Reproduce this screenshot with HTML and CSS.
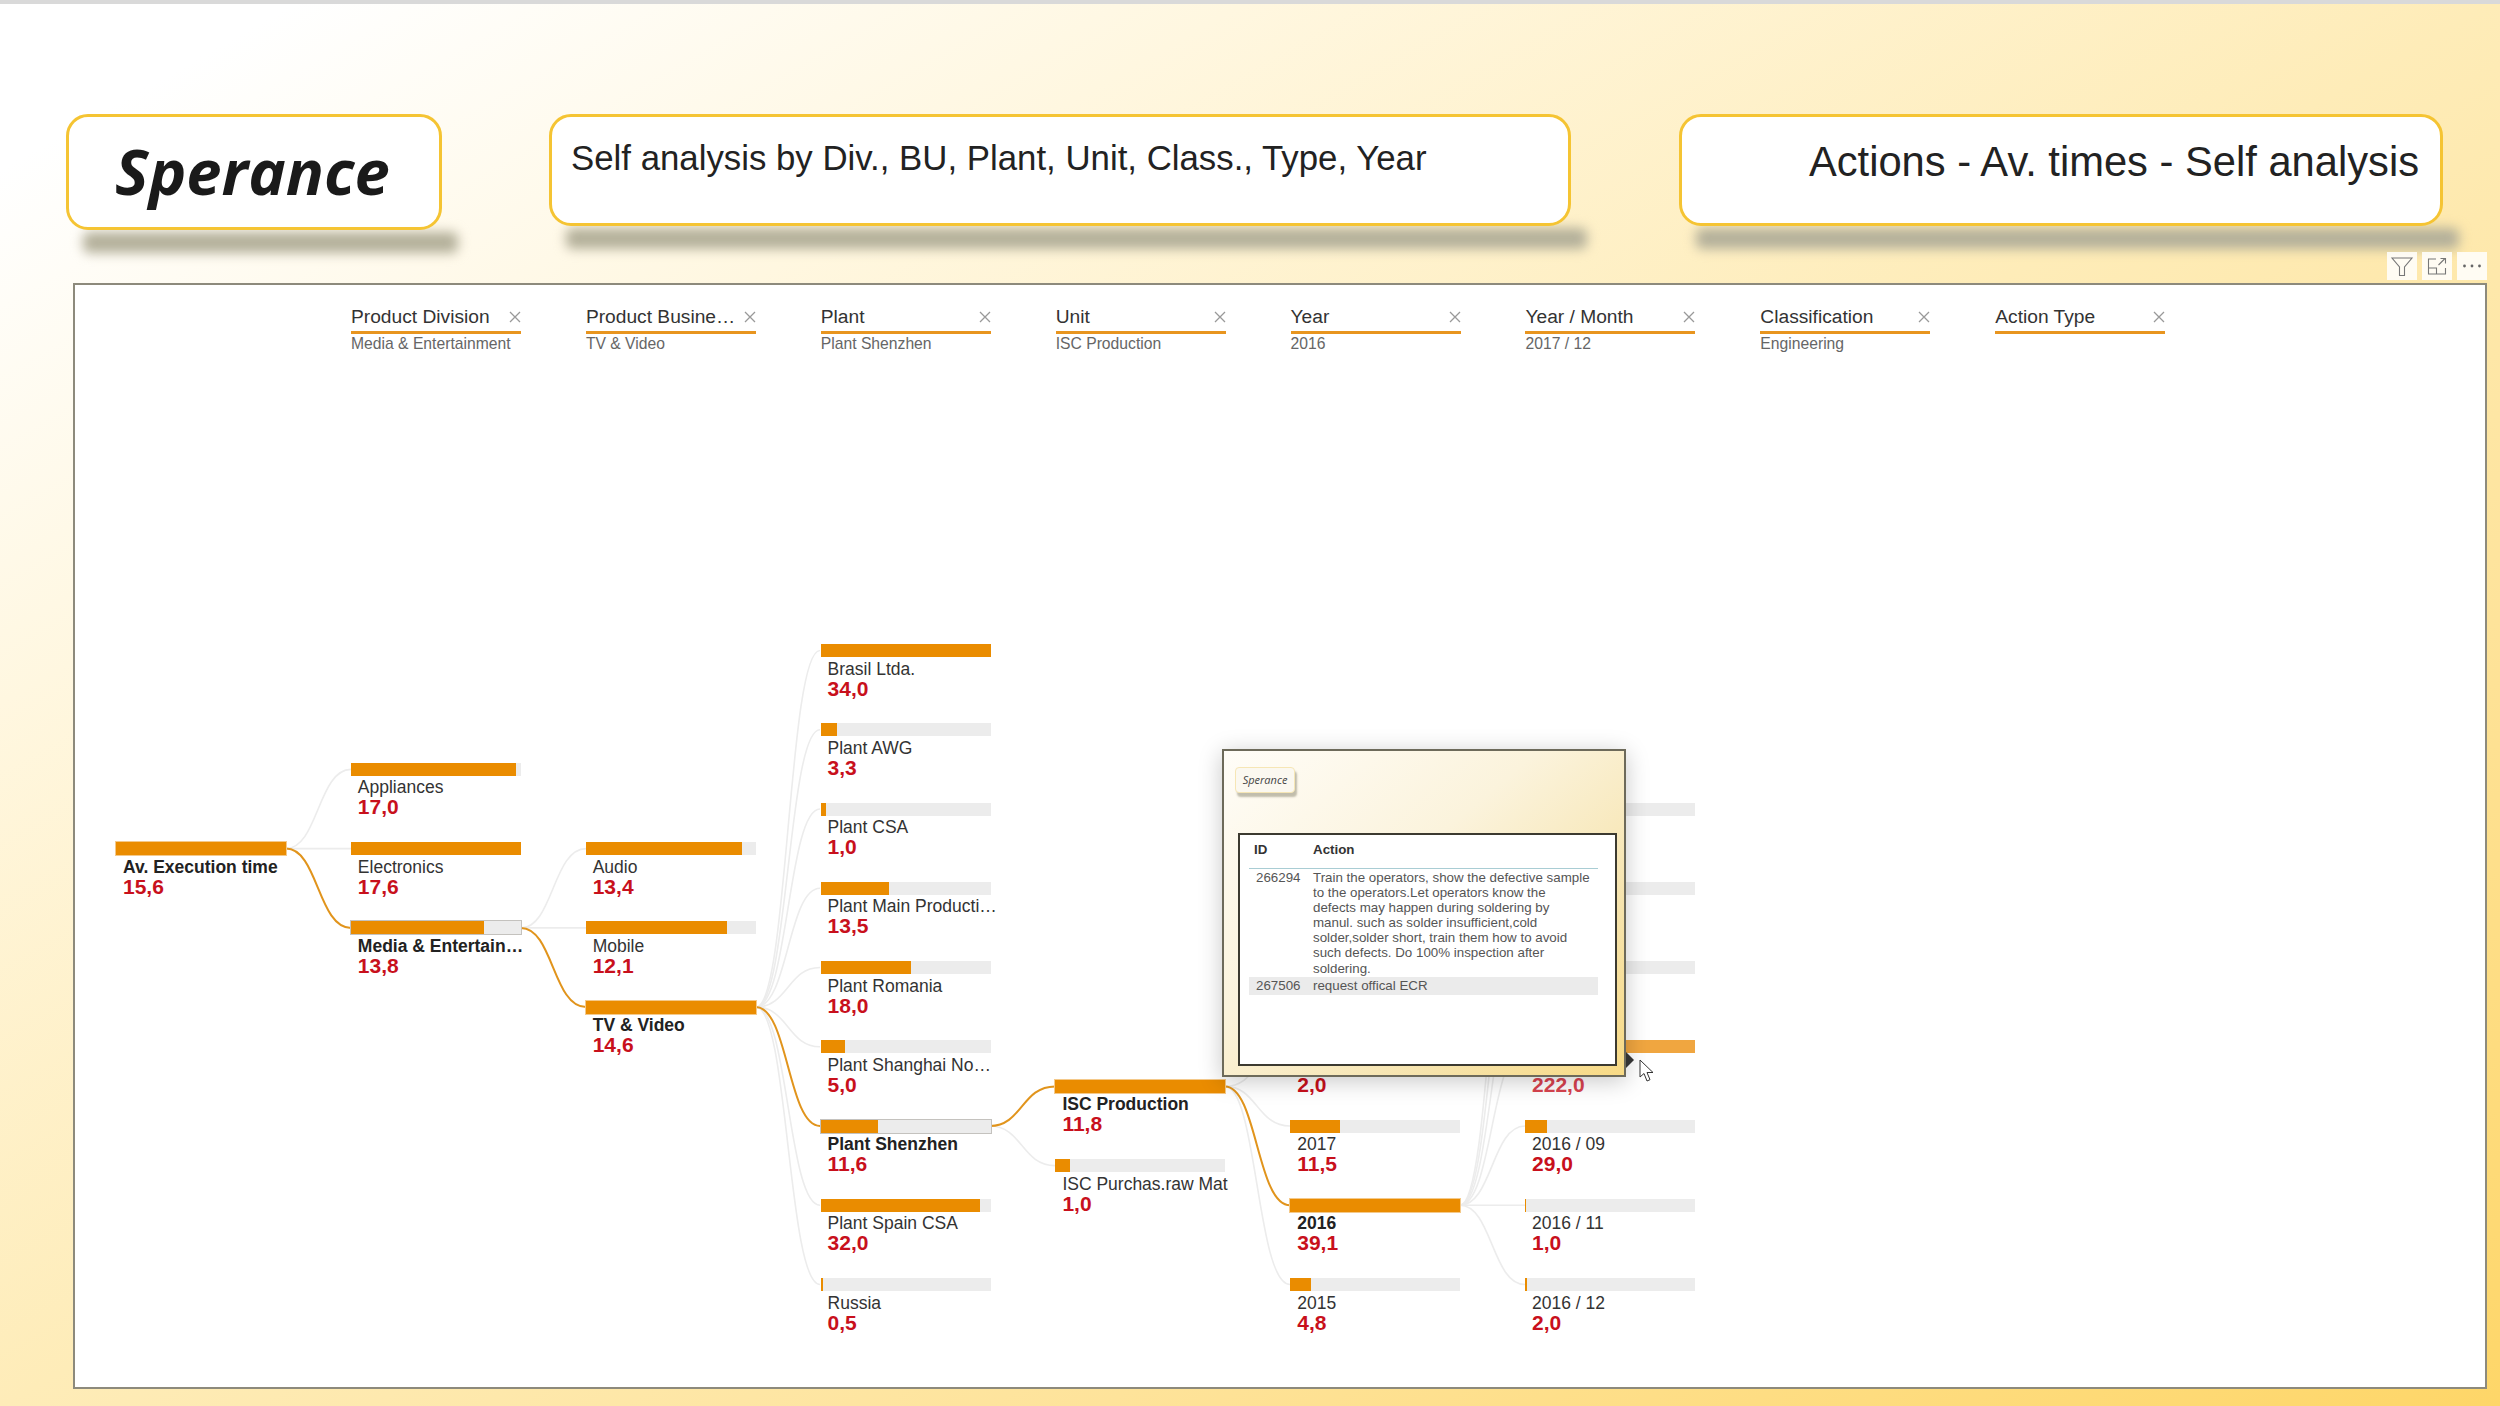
FILE: index.html
```html
<!DOCTYPE html>
<html lang="en">
<head>
<meta charset="utf-8">
<title>Actions - Av. times - Self analysis</title>
<link rel="stylesheet" href="styles.css">
</head>
<body>
<div class="strip"></div>
<header class="header">
  <div class="card card-logo"><span class="logo">Sperance</span></div>
  <div class="card card-sub">Self analysis by Div., BU, Plant, Unit, Class., Type, Year</div>
  <div class="card card-title">Actions - Av. times - Self analysis</div>
</header>
<div class="actions">
  <div class="action"><svg width="24" height="24" viewBox="0 0 24 24"><path d="M2 4H22L14.5 13V21.5H9.5V13Z" fill="none" stroke="#777" stroke-width="1.1"/></svg></div>
  <div class="action"><svg width="24" height="24" viewBox="0 0 24 24"><path d="M11 5H3.5V20H20.5V14M3.5 14H11.5V20M13.5 11L20 4.5M15.5 4.5H20.5V9.5" fill="none" stroke="#777" stroke-width="1.1"/></svg></div>
  <div class="action"><svg width="24" height="24" viewBox="0 0 24 24"><circle cx="4.5" cy="12" r="1.4" fill="#666"/><circle cx="12" cy="12" r="1.4" fill="#666"/><circle cx="19.5" cy="12" r="1.4" fill="#666"/></svg></div>
</div>
<main class="panel">
  <div class="slicers">
    <div class="slicer"><div class="slicer-head"><span>Product Division</span><svg class="x" width="12" height="12" viewBox="0 0 12 12"><path d="M1 1L11 11M11 1L1 11"/></svg></div><div class="slicer-sub">Media &amp; Entertainment</div></div>
    <div class="slicer"><div class="slicer-head"><span>Product Busine…</span><svg class="x" width="12" height="12" viewBox="0 0 12 12"><path d="M1 1L11 11M11 1L1 11"/></svg></div><div class="slicer-sub">TV &amp; Video</div></div>
    <div class="slicer"><div class="slicer-head"><span>Plant</span><svg class="x" width="12" height="12" viewBox="0 0 12 12"><path d="M1 1L11 11M11 1L1 11"/></svg></div><div class="slicer-sub">Plant Shenzhen</div></div>
    <div class="slicer"><div class="slicer-head"><span>Unit</span><svg class="x" width="12" height="12" viewBox="0 0 12 12"><path d="M1 1L11 11M11 1L1 11"/></svg></div><div class="slicer-sub">ISC Production</div></div>
    <div class="slicer"><div class="slicer-head"><span>Year</span><svg class="x" width="12" height="12" viewBox="0 0 12 12"><path d="M1 1L11 11M11 1L1 11"/></svg></div><div class="slicer-sub">2016</div></div>
    <div class="slicer"><div class="slicer-head"><span>Year / Month</span><svg class="x" width="12" height="12" viewBox="0 0 12 12"><path d="M1 1L11 11M11 1L1 11"/></svg></div><div class="slicer-sub">2017 / 12</div></div>
    <div class="slicer"><div class="slicer-head"><span>Classification</span><svg class="x" width="12" height="12" viewBox="0 0 12 12"><path d="M1 1L11 11M11 1L1 11"/></svg></div><div class="slicer-sub">Engineering</div></div>
    <div class="slicer"><div class="slicer-head"><span>Action Type</span><svg class="x" width="12" height="12" viewBox="0 0 12 12"><path d="M1 1L11 11M11 1L1 11"/></svg></div><div class="slicer-sub"></div></div>
  </div>
  <div class="tree">
    <svg class="links" width="1580" height="742" viewBox="116 644 1580 742">
      <g class="link">
        <path d="M286 848.6C318 848.6 318 769.4 351 769.4"/>
        <path d="M286 848.6H351"/>
        <path d="M521 927.9C553 927.9 553 848.6 586 848.6"/>
        <path d="M521 927.9H586"/>
        <path d="M756 1007.1C788 1007.1 788 650.5 820 650.5"/>
        <path d="M756 1007.1C788 1007.1 788 729.75 820 729.75"/>
        <path d="M756 1007.1C788 1007.1 788 809 820 809"/>
        <path d="M756 1007.1C788 1007.1 788 888.25 820 888.25"/>
        <path d="M756 1007.1C788 1007.1 788 967.5 820 967.5"/>
        <path d="M756 1007.1C788 1007.1 788 1046.75 820 1046.75"/>
        <path d="M756 1007.1C788 1007.1 788 1205.25 820 1205.25"/>
        <path d="M756 1007.1C788 1007.1 788 1284.5 820 1284.5"/>
        <path d="M990 1126C1022 1126 1022 1165.6 1055 1165.6"/>
        <path d="M1225 1086.4C1257 1086.4 1257 1046.75 1290 1046.75"/>
        <path d="M1225 1086.4C1257 1086.4 1257 1126 1290 1126"/>
        <path d="M1225 1086.4C1257 1086.4 1257 1284.5 1290 1284.5"/>
        <path d="M1460 1205.25C1492 1205.25 1492 809 1525 809"/>
        <path d="M1460 1205.25C1492 1205.25 1492 888.25 1525 888.25"/>
        <path d="M1460 1205.25C1492 1205.25 1492 967.5 1525 967.5"/>
        <path d="M1460 1205.25C1492 1205.25 1492 1046.75 1525 1046.75"/>
        <path d="M1460 1205.25C1492 1205.25 1492 1126 1525 1126"/>
        <path d="M1460 1205.25H1525"/>
        <path d="M1460 1205.25C1492 1205.25 1492 1284.5 1525 1284.5"/>
      </g>
      <g class="link-on">
        <path d="M286 848.6C318 848.6 318 927.9 351 927.9"/>
        <path d="M521 927.9C553 927.9 553 1007.1 586 1007.1"/>
        <path d="M756 1007.1C788 1007.1 788 1126 820 1126"/>
        <path d="M990 1126C1022 1126 1022 1086.4 1055 1086.4"/>
        <path d="M1225 1086.4C1257 1086.4 1257 1205.25 1290 1205.25"/>
      </g>
    </svg>

    <div class="col col-root">
      <div class="node on"><div class="bar"><div class="fill" style="width:100%"></div></div><div class="name">Av. Execution time</div><div class="val">15,6</div></div>
    </div>
    <div class="col col-div">
      <div class="node"><div class="bar"><div class="fill" style="width:97%"></div></div><div class="name">Appliances</div><div class="val">17,0</div></div>
      <div class="node"><div class="bar"><div class="fill" style="width:100%"></div></div><div class="name">Electronics</div><div class="val">17,6</div></div>
      <div class="node on sel"><div class="bar"><div class="fill" style="width:78.4%"></div></div><div class="name">Media &amp; Entertain…</div><div class="val">13,8</div></div>
    </div>
    <div class="col col-bu">
      <div class="node"><div class="bar"><div class="fill" style="width:92%"></div></div><div class="name">Audio</div><div class="val">13,4</div></div>
      <div class="node"><div class="bar"><div class="fill" style="width:83%"></div></div><div class="name">Mobile</div><div class="val">12,1</div></div>
      <div class="node on"><div class="bar"><div class="fill" style="width:100%"></div></div><div class="name">TV &amp; Video</div><div class="val">14,6</div></div>
    </div>
    <div class="col col-plant">
      <div class="node"><div class="bar"><div class="fill" style="width:100%"></div></div><div class="name">Brasil Ltda.</div><div class="val">34,0</div></div>
      <div class="node"><div class="bar"><div class="fill" style="width:9.6%"></div></div><div class="name">Plant AWG</div><div class="val">3,3</div></div>
      <div class="node"><div class="bar"><div class="fill" style="width:3%"></div></div><div class="name">Plant CSA</div><div class="val">1,0</div></div>
      <div class="node"><div class="bar"><div class="fill" style="width:40%"></div></div><div class="name">Plant Main Producti…</div><div class="val">13,5</div></div>
      <div class="node"><div class="bar"><div class="fill" style="width:53%"></div></div><div class="name">Plant Romania</div><div class="val">18,0</div></div>
      <div class="node"><div class="bar"><div class="fill" style="width:14.5%"></div></div><div class="name">Plant Shanghai No…</div><div class="val">5,0</div></div>
      <div class="node on sel"><div class="bar"><div class="fill" style="width:34%"></div></div><div class="name">Plant Shenzhen</div><div class="val">11,6</div></div>
      <div class="node"><div class="bar"><div class="fill" style="width:94%"></div></div><div class="name">Plant Spain CSA</div><div class="val">32,0</div></div>
      <div class="node"><div class="bar"><div class="fill" style="width:1.5%"></div></div><div class="name">Russia</div><div class="val">0,5</div></div>
    </div>
    <div class="col col-unit">
      <div class="node on"><div class="bar"><div class="fill" style="width:100%"></div></div><div class="name">ISC Production</div><div class="val">11,8</div></div>
      <div class="node"><div class="bar"><div class="fill" style="width:8.5%"></div></div><div class="name">ISC Purchas.raw Mat</div><div class="val">1,0</div></div>
    </div>
    <div class="col col-year">
      <div class="node"><div class="bar"><div class="fill" style="width:5%"></div></div><div class="name">&nbsp;</div><div class="val">2,0</div></div>
      <div class="node"><div class="bar"><div class="fill" style="width:29.4%"></div></div><div class="name">2017</div><div class="val">11,5</div></div>
      <div class="node on"><div class="bar"><div class="fill" style="width:100%"></div></div><div class="name">2016</div><div class="val">39,1</div></div>
      <div class="node"><div class="bar"><div class="fill" style="width:12%"></div></div><div class="name">2015</div><div class="val">4,8</div></div>
    </div>
    <div class="col col-month">
      <div class="node"><div class="bar"></div></div>
      <div class="node"><div class="bar"></div></div>
      <div class="node"><div class="bar"></div></div>
      <div class="node hover"><div class="bar"><div class="fill" style="width:100%"></div></div><div class="name">&nbsp;</div><div class="val">222,0</div></div>
      <div class="node"><div class="bar"><div class="fill" style="width:13%"></div></div><div class="name">2016 / 09</div><div class="val">29,0</div></div>
      <div class="node"><div class="bar"><div class="fill" style="width:0.8%"></div></div><div class="name">2016 / 11</div><div class="val">1,0</div></div>
      <div class="node"><div class="bar"><div class="fill" style="width:1%"></div></div><div class="name">2016 / 12</div><div class="val">2,0</div></div>
    </div>
  </div>
</main>

<aside class="tooltip">
  <div class="mini-logo">Sperance</div>
  <div class="tip-table">
    <div class="tip-head"><span class="cell-id">ID</span><span>Action</span></div>
    <div class="tip-row"><span class="cell-id num">266294</span><span class="cell-text">Train the operators, show the defective sample<br>to the operators.Let operators know the<br>defects may happen during soldering by<br>manul. such as solder insufficient,cold<br>solder,solder short, train them how to avoid<br>such defects. Do 100% inspection after<br>soldering.</span></div>
    <div class="tip-row alt"><span class="cell-id num">267506</span><span class="cell-text">request offical ECR</span></div>
  </div>
  <div class="caret"></div>
</aside>
<svg class="cursor" width="16" height="24" viewBox="0 0 16 24"><path d="M1 1V18L5 14.5L8 22L11 20.7L8 13.5H14Z" fill="#fff" stroke="#333" stroke-width="1"/></svg>
</body>
</html>
```
FILE: styles.css
```css
* { box-sizing: border-box; }
html, body { margin: 0; padding: 0; }
body {
  width: 2500px;
  height: 1406px;
  overflow: hidden;
  position: relative;
  font-family: "Liberation Sans", Arial, sans-serif;
  color: #333;
  background: linear-gradient(to bottom right, #ffffff 0%, #ffffff 6%, #fff7e0 25%, #feecb8 50%, #fee39a 72%, #fed668 100%);
}
.strip { height: 4px; background: #d9d9d9; }

.header {
  display: flex;
  align-items: flex-start;
  padding: 110px 0 0 66px;
  height: 226px;
}
.card {
  position: relative;
  background: #fff;
  border: 3px solid #f5c433;
  border-radius: 22px;
  color: #222;
}
.card::after {
  content: "";
  position: absolute;
  z-index: -1;
  left: 14px;
  right: -19px;
  top: calc(100% + 5px);
  height: 21px;
  background: #b4b09a;
  filter: blur(6px);
  border-radius: 6px;
}
.card-logo {
  width: 376px;
  height: 116px;
  margin-right: 107px;
  padding: 0 3px 3px 0;
  display: flex;
  align-items: center;
  justify-content: center;
}
.logo {
  font-family: "Open Sans", sans-serif;
  font-weight: 700;
  font-style: italic;
  font-size: 63.3px;
  line-height: 1;
  color: #1a1a1a;
}
.card-sub {
  width: 1022px;
  height: 112px;
  margin-right: 108px;
  padding: 19px 0 0 19px;
  font-size: 34.8px;
  line-height: 44px;
}
.card-title {
  width: 764px;
  height: 112px;
  padding: 21px 21px 0 0;
  text-align: right;
  font-size: 41.7px;
  line-height: 48px;
}

.actions {
  display: flex;
  justify-content: flex-end;
  gap: 5px;
  height: 28px;
  margin-top: 22px;
  padding-right: 13px;
}
.action {
  width: 30px;
  height: 28px;
  display: flex;
  align-items: center;
  justify-content: center;
  background: rgba(255, 255, 255, 0.85);
}

.panel {
  width: 2414px;
  height: 1106px;
  margin: 3px 0 0 73px;
  background: #fff;
  border: 2px solid #8d8a7c;
}
.slicers {
  display: flex;
  gap: 64.9px;
  padding: 21px 0 0 276px;
  height: 359px;
}
.slicer { width: 170px; }
.slicer-head {
  display: flex;
  align-items: center;
  justify-content: space-between;
  height: 28px;
  padding-bottom: 3px;
  border-bottom: 3px solid #e8951f;
  font-size: 19.2px;
  line-height: 22px;
  color: #333;
  white-space: nowrap;
}
.x { flex: none; }
.x path { fill: none; stroke: #999; stroke-width: 1.3; }
.slicer-sub {
  font-size: 15.7px;
  line-height: 20px;
  color: #666;
  white-space: nowrap;
}

.tree {
  position: relative;
  display: grid;
  grid-template-columns: repeat(7, 170px);
  column-gap: 64.85px;
  margin-left: 41px;
  height: 742px;
}
.links { position: absolute; left: 0; top: 0; z-index: 0; overflow: visible; }
.links path { fill: none; }
.link path { stroke: #ececec; stroke-width: 1.6; }
.link-on path { stroke: #e1941c; stroke-width: 2; }

.col { position: relative; z-index: 1; display: flex; flex-direction: column; }
.col-root { padding-top: 198.125px; }
.col-div { padding-top: 118.875px; }
.col-bu { padding-top: 198.125px; }
.col-plant { padding-top: 0; }
.col-unit { padding-top: 435.875px; }
.col-year { padding-top: 396.25px; }
.col-month { padding-top: 158.5px; }

.node { height: 79.25px; flex: none; }
.bar { height: 13px; background: #ececec; }
.fill { height: 100%; background: #ea8c00; }
.on .bar { box-shadow: 0 0 0 1px #f4c98a; }
.sel .bar { box-shadow: 0 0 0 1px #c4c2be; }
.name {
  margin-top: 2.5px;
  padding-left: 7px;
  font-size: 17.5px;
  line-height: 19px;
  color: #333;
  white-space: nowrap;
}
.on .name { font-weight: 700; color: #222; }
.val {
  padding-left: 7px;
  font-size: 21px;
  line-height: 19px;
  font-weight: 700;
  color: #c8101c;
}
.hover .fill { background: #f0a640; }
.hover .val { color: #d9434f; }

.tooltip {
  position: absolute;
  z-index: 5;
  left: 1222px;
  top: 749px;
  width: 404px;
  height: 328px;
  padding: 16px 7px 9px 11px;
  border: 2px solid #6d6a5a;
  background: linear-gradient(140deg, #fffdf8 0%, #fbf3dc 40%, #f6e3ab 75%, #f8da85 100%);
  box-shadow: 0 4px 22px rgba(0, 0, 0, 0.22);
}
.mini-logo {
  width: 60px;
  height: 26px;
  border: 1px solid #f6e6b5;
  border-radius: 4px;
  background: #fbf8f0;
  box-shadow: 2px 4px 2px rgba(120, 115, 90, 0.45);
  font-family: "Open Sans", sans-serif;
  font-style: italic;
  font-size: 11px;
  line-height: 24px;
  text-align: center;
  color: #444;
}
.tip-table {
  margin-top: 40px;
  margin-left: 3px;
  width: 379px;
  height: 233px;
  padding: 4px 17px 0 9px;
  background: #fff;
  border: 2px solid #3c3a30;
  font-size: 13.33px;
  line-height: 15.1px;
  color: #555;
}
.tip-head {
  display: flex;
  height: 30px;
  padding-top: 3px;
  border-bottom: 1px solid #a9cdd4;
  font-weight: 700;
  color: #333;
}
.cell-id { flex: none; width: 64px; padding-left: 5px; }
.num { padding-left: 7px; }
.tip-row { display: flex; padding: 1px 0; }
.cell-text { flex: 1; white-space: nowrap; }
.tip-row.alt {
  background: #ebebeb;
  padding: 1px 0 2px;
}
.caret {
  position: absolute;
  right: -10px;
  bottom: 7px;
  width: 0;
  height: 0;
  border-left: 8px solid #333;
  border-top: 8px solid transparent;
  border-bottom: 8px solid transparent;
}
.cursor { position: absolute; z-index: 6; left: 1639px; top: 1059px; }
```
